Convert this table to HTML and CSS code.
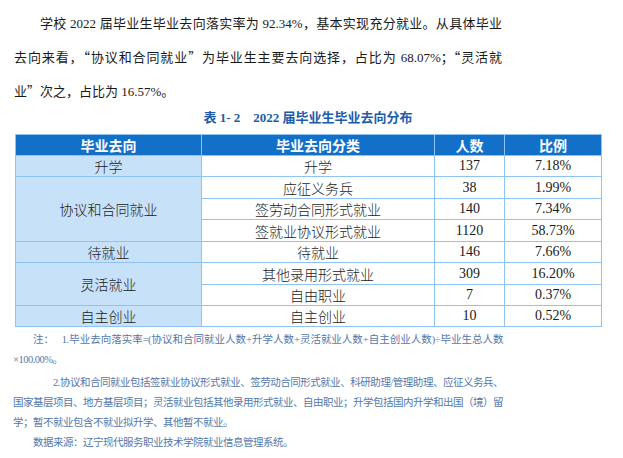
FILE: index.html
```html
<!DOCTYPE html>
<html lang="zh-CN">
<head>
<meta charset="utf-8">
<link rel="stylesheet" href="styles.css">
</head>
<body>
<div class="page">
  <p class="lead">
    <span class="ln first">学校 2022 届毕业生毕业去向落实率为 92.34%，基本实现充分就业。从具体毕业</span>
    <span class="ln">去向来看，<span class="q">“</span>协议和合同就业<span class="q">”</span>为毕业生主要去向选择，占比为 68.07%；<span class="q">“</span>灵活就</span>
    <span class="ln last">业<span class="q">”</span>次之，占比为 16.57%。</span>
  </p>
  <div class="caption">表 1- 2&nbsp;&nbsp;&nbsp;&nbsp;2022 届毕业生毕业去向分布</div>
  <table class="dist">
    <colgroup>
      <col class="c1"><col class="c2"><col class="c3"><col class="c4">
    </colgroup>
    <thead>
      <tr><th>毕业去向</th><th>毕业去向分类</th><th>人数</th><th>比例</th></tr>
    </thead>
    <tbody>
      <tr class="ra"><td class="grp">升学</td><td class="cn">升学</td><td>137</td><td>7.18%</td></tr>
      <tr class="rb"><td class="grp" rowspan="3">协议和合同就业</td><td class="cn">应征义务兵</td><td>38</td><td>1.99%</td></tr>
      <tr class="ra"><td class="cn">签劳动合同形式就业</td><td>140</td><td>7.34%</td></tr>
      <tr class="rb"><td class="cn">签就业协议形式就业</td><td>1120</td><td>58.73%</td></tr>
      <tr class="ra"><td class="grp">待就业</td><td class="cn">待就业</td><td>146</td><td>7.66%</td></tr>
      <tr class="rb"><td class="grp" rowspan="2">灵活就业</td><td class="cn">其他录用形式就业</td><td>309</td><td>16.20%</td></tr>
      <tr class="ra"><td class="cn">自由职业</td><td>7</td><td>0.37%</td></tr>
      <tr class="ra"><td class="grp">自主创业</td><td class="cn">自主创业</td><td>10</td><td>0.52%</td></tr>
    </tbody>
  </table>
  <div class="notes">
    <p class="np">
      <span class="ln i20">注：&nbsp;&nbsp;&nbsp;1.毕业去向落实率=(协议和合同就业人数+升学人数+灵活就业人数+自主创业人数)÷毕业生总人数</span>
      <span class="ln last">×100.00%。</span>
    </p>
    <p class="np gap">
      <span class="ln i40">2.协议和合同就业包括签就业协议形式就业、签劳动合同形式就业、科研助理/管理助理、应征义务兵、</span>
      <span class="ln">国家基层项目、地方基层项目；灵活就业包括其他录用形式就业、自由职业；升学包括国内升学和出国（境）留</span>
      <span class="ln last">学；暂不就业包含不就业拟升学、其他暂不就业。</span>
    </p>
    <p class="np">
      <span class="ln last i20">数据来源：辽宁现代服务职业技术学院就业信息管理系统。</span>
    </p>
  </div>
</div>
</body>
</html>
```
FILE: styles.css
```css
html, body {
  margin: 0;
  padding: 0;
  background: #ffffff;
}
.page {
  width: 623px;
  height: 458px;
  overflow: hidden;
  font-family: "Liberation Serif", "Noto Sans CJK SC", serif;
  color: #1a1a1a;
}
.ln {
  display: block;
  text-align: justify;
  text-align-last: justify;
}
.ln.last {
  text-align: left;
  text-align-last: left;
}
.lead {
  margin: 7px 0 0 14px;
  width: 488px;
  font-size: 13px;
  line-height: 33px;
}
.lead .first {
  padding-left: 26px;
}
.q {
  font-family: "Noto Sans CJK SC", sans-serif;
  font-feature-settings: "fwid";
}
.caption {
  margin-top: 0;
  text-align: center;
  font-size: 13px;
  font-weight: bold;
  color: #1c5ca8;
  line-height: 20px;
  padding-left: 15px;
  width: 586px;
}
.dist {
  margin: 6px 0 0 15px;
  border-collapse: collapse;
  table-layout: fixed;
  width: 586px;
  font-size: 14px;
}
.c1 { width: 186px; }
.c2 { width: 233px; }
.c3 { width: 70px; }
.c4 { width: 97px; }
.dist th, .dist td {
  border: 1px solid #8fc3f3;
  padding: 0;
  text-align: center;
  vertical-align: middle;
  line-height: 16px;
}
.dist th {
  background: #1370c9;
  color: #ffffff;
  font-weight: bold;
  height: 20px;
  font-family: "Noto Sans CJK SC", sans-serif;
  font-size: 14px;
}
.dist td {
  color: #1a1a1a;
}
.dist td.grp {
  background: #c7e1f8;
  font-family: "Noto Sans CJK SC", sans-serif;
  font-weight: 300;
}
.dist td.cn {
  font-family: "Noto Sans CJK SC", sans-serif;
  font-weight: 300;
}
.ra td { height: 20px; }
.rb td { height: 21px; }
.notes {
  margin: 3px 0 0 13px;
  width: 490px;
  font-size: 10.5px;
  letter-spacing: -0.5px;
  line-height: 20px;
  color: #5577aa;
}
.np {
  margin: 0;
}
.np.gap {
  margin-top: 3px;
}
.i20 {
  padding-left: 20px;
}
.i40 {
  padding-left: 40px;
}
```
